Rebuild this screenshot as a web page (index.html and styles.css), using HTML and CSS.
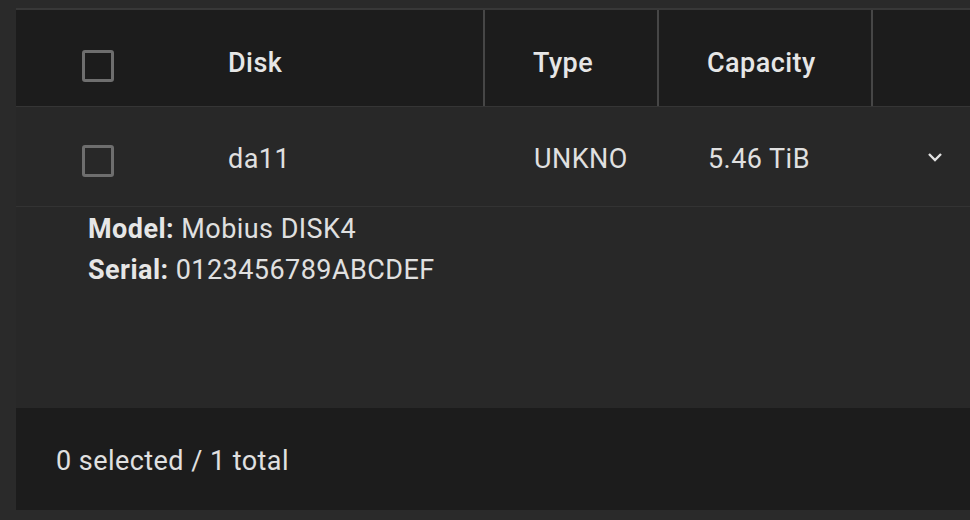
FILE: index.html
```html
<!DOCTYPE html>
<html lang="en">
<head>
  <meta charset="UTF-8" />
  <title>Disks</title>
  <link rel="stylesheet" href="styles.css">
</head>
<body>

<div class="disk-table">
  <!-- Header -->
  <div class="table-row header-row">
    <div class="cell cell-check"><span class="checkbox"></span></div>
    <div class="cell cell-disk">Disk</div>
    <div class="cell cell-type divided">Type</div>
    <div class="cell cell-capacity divided">Capacity</div>
    <div class="cell cell-expand divided"></div>
  </div>

  <!-- Disk row -->
  <div class="table-row body-row">
    <div class="cell cell-check"><span class="checkbox"></span></div>
    <div class="cell cell-disk">da11</div>
    <div class="cell cell-type">UNKNO</div>
    <div class="cell cell-capacity">5.46 TiB</div>
    <div class="cell cell-expand">
      <svg class="chevron" width="16" height="10" viewBox="0 0 16 10">
        <path d="M2 2 L8 8 L14 2" fill="none" stroke="#e2e2e2" stroke-width="2.4" />
      </svg>
    </div>
  </div>

  <!-- Expanded details -->
  <div class="details">
    <div class="detail-line"><b>Model:</b> Mobius DISK4</div>
    <div class="detail-line"><b>Serial:</b> 0123456789ABCDEF</div>
  </div>

  <!-- Footer -->
  <div class="table-footer">0 selected / 1 total</div>
</div>

</body>
</html>
```

FILE: styles.css
```css
body {
  margin: 0;
  background-color: #2a2a2a;
  font-family: Roboto, "Liberation Sans", sans-serif;
  color: #e0e0e0;
  letter-spacing: 0.45px;
  overflow: hidden;
}

.disk-table {
  margin: 8px 0 0 16px;
  border-top: 2px solid #383838;
  background-color: #282828;
}

.table-row {
  display: grid;
  grid-template-columns: 164px 303px 174px 214px 1fr;
  box-sizing: border-box;
}

.cell {
  display: flex;
  align-items: center;
  font-size: 27px;
  padding-left: 48px;
}

.cell-check {
  padding-left: 66px;
}

.header-row {
  height: 97px;
  background-color: #1c1c1c;
  border-bottom: 1px solid #353535;
}

.header-row .cell {
  font-weight: 500;
  color: #e6e6e6;
  padding-top: 10px;
}

.header-row .cell-check {
  padding-top: 16px;
}

.header-row .divided {
  border-left: 2px solid #464646;
}

.body-row {
  height: 100px;
  border-bottom: 1px solid #333333;
}

.body-row .cell {
  padding-top: 4px;
}

.body-row .cell-check {
  padding-top: 8px;
}

.body-row .cell-type,
.body-row .cell-capacity {
  padding-left: 51px;
}

.body-row .cell-expand {
  padding-left: 56px;
  padding-top: 0;
}

.checkbox {
  width: 26px;
  height: 26px;
  border: 3px solid #6e6e6e;
  border-radius: 3px;
}

.chevron {
  display: block;
}

.details {
  height: 201px;
  padding: 2px 0 0 72px;
  box-sizing: border-box;
  font-size: 27px;
}

.detail-line {
  line-height: 41px;
}

.detail-line b {
  font-weight: 700;
  color: #e6e6e6;
}

.table-footer {
  height: 102px;
  background-color: #1c1c1c;
  display: flex;
  align-items: center;
  padding-left: 40px;
  padding-top: 4px;
  box-sizing: border-box;
  font-size: 27px;
}
```
